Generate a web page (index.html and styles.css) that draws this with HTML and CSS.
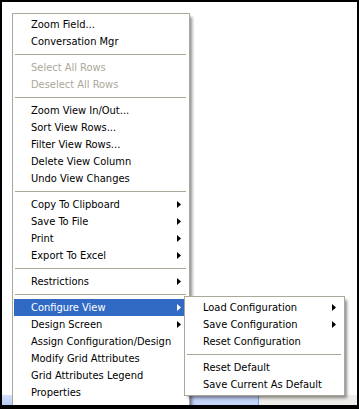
FILE: index.html
```html
<html>
<head>
    <link rel="stylesheet" href="styles.css">
</head>
<body>
<div class="frame">
    <div class="strip">
        <div class="strip-left">&nbsp;</div>
        <div class="strip-gap">&nbsp;</div>
        <div class="strip-box">&nbsp;</div>
        <div class="strip-rest">&nbsp;</div>
    </div>

    <div class="menu main-menu">
        <div class="item">Zoom Field...</div>
        <div class="item">Conversation Mgr</div>
        <div class="sep"></div>
        <div class="item disabled">Select All Rows</div>
        <div class="item disabled">Deselect All Rows</div>
        <div class="sep"></div>
        <div class="item">Zoom View In/Out...</div>
        <div class="item">Sort View Rows...</div>
        <div class="item">Filter View Rows...</div>
        <div class="item">Delete View Column</div>
        <div class="item">Undo View Changes</div>
        <div class="sep"></div>
        <div class="item">Copy To Clipboard<span class="arrow"></span></div>
        <div class="item">Save To File<span class="arrow"></span></div>
        <div class="item">Print<span class="arrow"></span></div>
        <div class="item">Export To Excel<span class="arrow"></span></div>
        <div class="sep"></div>
        <div class="item">Restrictions<span class="arrow"></span></div>
        <div class="sep"></div>
        <div class="item active">Configure View<span class="arrow"></span></div>
        <div class="item">Design Screen<span class="arrow"></span></div>
        <div class="item">Assign Configuration/Design</div>
        <div class="item">Modify Grid Attributes</div>
        <div class="item">Grid Attributes Legend</div>
        <div class="item">Properties</div>
        <div class="sep"></div>
        <div class="item">&nbsp;</div>
    </div>

    <div class="menu sub-menu">
        <div class="item">Load Configuration<span class="arrow"></span></div>
        <div class="item">Save Configuration<span class="arrow"></span></div>
        <div class="item">Reset Configuration</div>
        <div class="sep"></div>
        <div class="item">Reset Default</div>
        <div class="item">Save Current As Default</div>
    </div>
</div>
</body>
</html>
```

FILE: styles.css
```css
html, body {
    margin: 0;
    background: white;
}

.frame {
    position: relative;
    box-sizing: border-box;
    width: 359px;
    height: 409px;
    border: 2px solid black;
    border-bottom-width: 4px;
    background: white;
    overflow: hidden;
    display: flex;
    flex-direction: column;
    font-family: "DejaVu Sans Condensed", "Liberation Sans", sans-serif;
    font-size: 11px;
}

/* bits of the window peeking out under the menus */
.strip {
    margin-top: auto;
    height: 10px;
    display: flex;
}

.strip-left {
    width: 10px;
    background: linear-gradient(#d3e0fb, #b9cdf6);
}

.strip-gap {
    width: 178px;
}

.strip-box {
    width: 68px;
    background: #c3d3f9;
    border-right: 1px solid #7d9be0;
}

.strip-rest {
    flex: 1;
    background: #eeede9;
}

.menu {
    position: absolute;
    box-sizing: border-box;
    background: white;
    border: 1px solid #aca899;
    padding: 2px 2px 2px 1px;
    box-shadow: 3px 3px 3px -1px rgba(0, 0, 0, 0.45);
}

.main-menu {
    left: 10px;
    top: 11px;
    width: 178px;
}

.sub-menu {
    left: 182px;
    top: 294px;
    width: 161px;
    z-index: 2;
}

.item {
    position: relative;
    height: 17px;
    line-height: 17px;
    padding-left: 17px;
    color: black;
    white-space: nowrap;
}

.item.disabled {
    color: #aca899;
}

.item.active {
    background: #316ac5;
    color: white;
}

.arrow {
    position: absolute;
    right: 6px;
    top: 5px;
    width: 4px;
    height: 7px;
    background: currentColor;
    clip-path: polygon(0 0, 100% 50%, 0 100%);
}

.sep {
    height: 1px;
    margin: 4px 1px;
    background: #aca899;
}
```
